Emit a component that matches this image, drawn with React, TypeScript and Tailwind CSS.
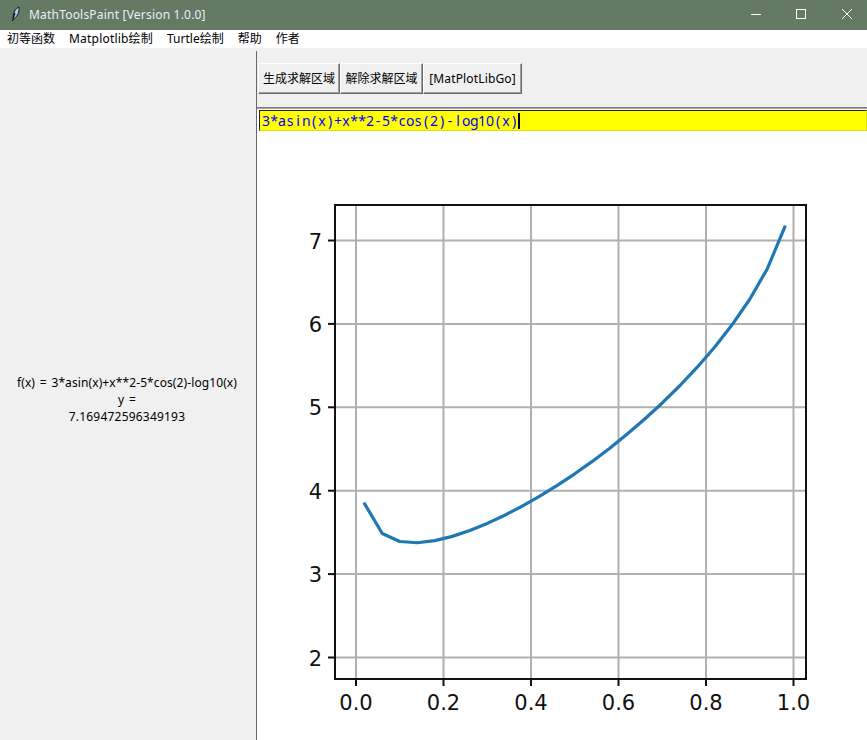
import React from "react";

const xs: number[] = [];
for (let i = 0; i < 25; i++) xs.push(0.02 + i * 0.04);
const f = (x: number) => 3 * Math.asin(x) + x * x - 5 * Math.cos(2) - Math.log10(x);
const X0 = 257, Y0 = 131;
const px = (x: number) => 356 + x * 437.5 - X0;
const py = (y: number) => 240.5 + (7 - y) * 83.4 - Y0;
const pts = xs.map((x) => `${px(x)},${py(f(x))}`).join(" ");

function Chart() {
  const left = 335 - X0, right = 806 - X0, top = 205 - Y0, bottom = 679 - Y0;
  const xt = [0, 0.2, 0.4, 0.6, 0.8, 1.0];
  const yt = [2, 3, 4, 5, 6, 7];
  return (
    <svg width="610" height="609" viewBox="0 0 610 609" className="block">
      {xt.map((t) => (
        <line key={t} x1={px(t)} x2={px(t)} y1={top} y2={bottom} stroke="#b0b0b0" strokeWidth="2" />
      ))}
      {yt.map((t) => (
        <line key={t} x1={left} x2={right} y1={py(t)} y2={py(t)} stroke="#b0b0b0" strokeWidth="2" />
      ))}
      <polyline points={pts} fill="none" stroke="#1f77b4" strokeWidth="3.2" strokeLinecap="square" strokeLinejoin="round" />
      <rect x={left} y={top} width={right - left} height={bottom - top} fill="none" stroke="#111" strokeWidth="2" />
      {xt.map((t) => (
        <g key={t}>
          <line x1={px(t)} x2={px(t)} y1={bottom} y2={bottom + 7} stroke="#111" strokeWidth="2" />
          <text x={px(t)} y={bottom + 31} textAnchor="middle" fontFamily="'DejaVu Sans', sans-serif" fontSize="21" fill="#111">
            {t.toFixed(1)}
          </text>
        </g>
      ))}
      {yt.map((t) => (
        <g key={t}>
          <line x1={left - 7} x2={left} y1={py(t)} y2={py(t)} stroke="#111" strokeWidth="2" />
          <text x={left - 13} y={py(t) + 8} textAnchor="end" fontFamily="'DejaVu Sans', sans-serif" fontSize="21" fill="#111">
            {t}
          </text>
        </g>
      ))}
    </svg>
  );
}

const cjk = "font-['Noto_Sans','Noto_Sans_CJK_SC',sans-serif]";
const expr = "3*asin(x)+x**2-5*cos(2)-log10(x)";

function TkButton({ label, w, extra }: { label: string; w: string; extra?: string }) {
  return (
    <div className={`${w} h-[31px] flex items-center justify-center bg-[#f0f0f0] border border-t-white border-l-white border-r-[#696969] border-b-[#696969] text-[12px] text-black shadow-[inset_-1px_-1px_0_#a0a0a0] ${extra ?? ""} ${cjk}`}>
      {label}
    </div>
  );
}

export default function App() {
  return (
    <div className={`w-[867px] h-[740px] flex flex-col overflow-hidden bg-white ${cjk}`}>
      <div className="h-[30px] shrink-0 bg-[#647a63] flex items-center text-white">
        <svg width="16" height="18" viewBox="0 0 16 18" className="ml-[8px]">
          <path d="M11 1 C7.5 2.5 5.5 6 5 11.5 L6.5 12.5 C9.5 10 11.5 6 11 1 Z" fill="#a9d4f5" stroke="#111" strokeWidth="1" />
          <path d="M7 7 L4.5 15" stroke="#111" strokeWidth="1.2" />
        </svg>
        <span className="ml-[5px] text-[12px] text-[#e8f0f8] tracking-[0.2px]">MathToolsPaint [Version 1.0.0]</span>
        <div className="ml-auto flex h-full items-center">
          <svg width="46" height="30" viewBox="0 0 46 30"><path d="M22 14.5 H32" stroke="#fff" strokeWidth="1" /></svg>
          <svg width="46" height="30" viewBox="0 0 46 30"><rect x="21.5" y="9.5" width="9" height="9" fill="none" stroke="#fff" strokeWidth="1" /></svg>
          <svg width="46" height="30" viewBox="0 0 46 30"><path d="M21 9 L31 19 M31 9 L21 19" stroke="#fff" strokeWidth="1" /></svg>
        </div>
      </div>
      <div className="h-[18px] shrink-0 bg-white flex items-center text-[12px] text-black pl-[7px] gap-[14px]">
        <span>初等函数</span>
        <span className="tracking-[0.2px]">Matplotlib绘制</span>
        <span>Turtle绘制</span>
        <span>帮助</span>
        <span>作者</span>
      </div>
      <div className="flex-1 flex min-h-0 bg-[#f0f0f0]">
        <div className="w-[254px] shrink-0 flex flex-col items-center justify-center text-[12px] leading-[17px] text-black pt-[10px] tracking-[0.1px] [word-spacing:1.5px] mr-[2px]">
          <div>f(x) = 3*asin(x)+x**2-5*cos(2)-log10(x)</div>
          <div>y =</div>
          <div className="tracking-[0.2px]">7.169472596349193</div>
        </div>
        <div className="flex-1 flex flex-col min-w-0 mt-[3px] border-l border-[#696969] ml-0">
          <div className="h-[56px] shrink-0 flex items-start pl-[1px] pt-[12px] gap-0">
            <TkButton label="生成求解区域" w="w-[82px]" />
            <TkButton label="解除求解区域" w="w-[83px]" />
            <TkButton label="[MatPlotLibGo]" w="w-[99px]" extra="tracking-[0.15px]" />
          </div>
          <div className="h-[3px] shrink-0 border-t border-[#808080] border-b border-b-white bg-[#a0a0a0]" />
          <div className="flex-1 flex flex-col bg-white min-h-0">
            <div className="h-[21px] shrink-0 ml-[2px] bg-[#ffff00] border-t border-l border-t-[#202020] border-l-[#202020] border-b border-b-[#e0e000] border-r border-r-[#e0e000] flex items-center text-[14px] text-[#0000ff]">
              <span className="pl-[2px] flex">
                {expr.split("").map((c, i) => (
                  <span key={i} className="w-[8px] text-center">{c}</span>
                ))}
              </span>
              <span className="w-[2px] h-[16px] bg-black" />
            </div>
            <Chart />
          </div>
        </div>
      </div>
    </div>
  );
}
